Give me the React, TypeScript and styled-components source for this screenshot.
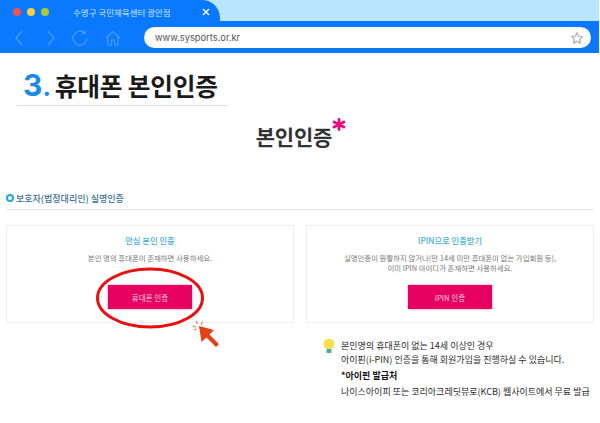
import styled, { createGlobalStyle } from 'styled-components';

const GlobalStyle = createGlobalStyle`
  html, body {
    margin: 0;
    padding: 0;
    background: #fff;
    font-family: 'Noto Sans CJK KR', 'Noto Sans', sans-serif;
  }
`;

const Page = styled.div`
  position: relative;
  width: 600px;
  height: 423px;
  overflow: hidden;
  background: #fff;
`;

// 브라우저 크롬
const TabBar = styled.div`
  height: 21px;
  margin-right: 1px;
  background: #b8e5ff;
  display: flex;
`;

const Tab = styled.div`
  width: 220px;
  height: 21px;
  background: #0a78ff;
  border-radius: 0 18px 0 0;
  display: flex;
  align-items: center;
  padding: 3px 0 0 13px;
  box-sizing: border-box;
`;

const Dots = styled.div`
  display: flex;
  gap: 6px;
`;

const Dot = styled.span<{ $color: string }>`
  width: 8px;
  height: 8px;
  border-radius: 50%;
  background: ${(p) => p.$color};
`;

const TabTitle = styled.span`
  margin-left: 24px;
  width: 100px;
  font-size: 8.5px;
  color: #cfe6ff;
  white-space: nowrap;
`;

const TabClose = styled.svg`
  margin-left: 28px;
  width: 10px;
  height: 10px;
`;

const Toolbar = styled.div`
  height: 32px;
  margin-right: 1px;
  background: #0a78ff;
  display: flex;
  align-items: center;
  padding: 1px 0 0 14px;
  box-sizing: border-box;
`;

const NavIcons = styled.div`
  display: grid;
  grid-template-columns: 32px 26px 33px 16px;
  align-items: center;
  width: 130px;
`;

const AddressBar = styled.div`
  width: 447px;
  height: 21px;
  background: #fff;
  border-radius: 11px;
  display: flex;
  align-items: center;
  justify-content: space-between;
  padding: 0 7px 0 11px;
  box-sizing: border-box;
  font-family: 'Inter', 'Noto Sans', sans-serif;
  font-size: 9.3px;
  color: #555;
`;

// 제목
const HeadingRow = styled.div`
  display: flex;
  align-items: baseline;
  width: 211px;
  margin: 14px 0 0 17px;
  padding-left: 6px;
  height: 39px;
  box-sizing: border-box;
  border-bottom: 1px solid #dedede;
  line-height: 36px;
`;

const StepNumber = styled.span`
  font-family: 'Inter', sans-serif;
  font-weight: 700;
  font-size: 30px;
  color: #1e88ee;
`;

const StepDot = styled.span`
  font-family: 'Inter', sans-serif;
  font-weight: 800;
  font-size: 24px;
  color: #1e88ee;
  margin-right: 4px;
`;

const HeadingText = styled.h1`
  margin: 0;
  font-size: 24.7px;
  font-weight: 700;
  color: #1a1a1a;
  letter-spacing: -0.2px;
`;

const Logo = styled.div`
  height: 42px;
  margin-top: 9px;
  padding-left: 2px;
  display: flex;
  justify-content: center;
  align-items: center;
  font-size: 21px;
  font-weight: 700;
  color: #333;
  letter-spacing: -0.2px;
`;

const LogoMark = styled.svg`
  align-self: flex-start;
  margin-top: 3px;
  width: 14px;
  height: 13px;
`;

const Section = styled.div`
  margin: 30px 6px 0 6px;
  height: 22px;
  border-bottom: 1px solid #e6e6e6;
  display: flex;
  align-items: center;
  gap: 2px;
  font-size: 9px;
  font-weight: 500;
  color: #3b6d94;
`;

const Ring = styled.span`
  width: 8px;
  height: 8px;
  box-sizing: border-box;
  border: 2px solid #1fa8d8;
  border-radius: 50%;
`;

const Cards = styled.div`
  display: grid;
  grid-template-columns: 288px 288px;
  gap: 12px;
  margin: 15px 0 0 6px;
`;

const Card = styled.div`
  position: relative;
  height: 98px;
  border: 1px solid #eee;
  box-sizing: border-box;
  display: flex;
  flex-direction: column;
  align-items: center;
  padding-top: 8px;
`;

const CardTitle = styled.div`
  font-size: 8.3px;
  line-height: 12px;
  font-weight: 500;
  color: #47aed6;
`;

const CardText = styled.div`
  margin-top: 7px;
  font-size: 7.4px;
  line-height: 10px;
  height: 20px;
  color: #777;
  text-align: center;
  white-space: nowrap;
`;

const AuthButton = styled.div`
  width: 84px;
  height: 24px;
  margin-top: 12px;
  background: #e6005f;
  color: #fbd0e2;
  box-shadow: 0 0 3px rgba(230, 0, 95, 0.4);
  font-size: 7.6px;
  display: flex;
  align-items: center;
  justify-content: center;
`;

const Ellipse = styled.svg`
  position: absolute;
  left: 88px;
  top: 40px;
`;

const Pointer = styled.svg`
  position: absolute;
  left: 190px;
  top: 320px;
`;

const Notes = styled.div`
  display: flex;
  gap: 5px;
  margin: 16px 0 0 322px;
`;

const Bulb = styled.svg`
  flex: none;
  margin-top: -1px;
`;

const NoteBody = styled.div`
  font-size: 9px;
  color: #2a2a2a;
  line-height: 14px;
  white-space: nowrap;
`;

const NoteStrong = styled.div`
  margin: 2px 0;
  font-weight: 700;
  color: #111;
`;

const NavIcon = ({ d, w = 10 }: { d: string; w?: number }) => (
  <svg width={w} height="16" viewBox={`0 0 ${w} 16`} fill="none" stroke="#4a9fff" strokeWidth="1.2">
    <path d={d} />
  </svg>
);

export default function App() {
  return (
    <>
      <GlobalStyle />
      <Page>
        <TabBar>
          <Tab>
            <Dots>
              <Dot $color="#f0524f" />
              <Dot $color="#f5d040" />
              <Dot $color="#a8cc30" />
            </Dots>
            <TabTitle>수영구 국민체육센터 광안점</TabTitle>
            <TabClose viewBox="0 0 10 10" fill="none" stroke="#fff" strokeWidth="1.4">
              <path d="M2 2 L8 8 M8 2 L2 8" />
            </TabClose>
          </Tab>
        </TabBar>
        <Toolbar>
          <NavIcons>
            <NavIcon d="M8 1 L2 8 L8 15" />
            <NavIcon d="M2 1 L8 8 L2 15" />
            <NavIcon w={16} d="M12.5 2.8 A7 7 0 1 0 15 8 M13 0.5 V3.5 H10" />
            <NavIcon w={16} d="M1 8 L8 1.5 L15 8 M3 7 V15 H6.5 V10 H9.5 V15 H13 V7" />
          </NavIcons>
          <AddressBar>
            www.sysports.or.kr
            <svg width="14" height="14" viewBox="0 0 24 24" fill="none" stroke="#bdbdbd" strokeWidth="2.6" strokeLinejoin="round">
              <path d="M12 3 L14.8 9 L21.5 9.8 L16.5 14.3 L17.9 21 L12 17.6 L6.1 21 L7.5 14.3 L2.5 9.8 L9.2 9 Z" />
            </svg>
          </AddressBar>
        </Toolbar>

        <HeadingRow>
          <StepNumber>3</StepNumber>
          <StepDot>.</StepDot>
          <HeadingText>휴대폰 본인인증</HeadingText>
        </HeadingRow>

        <Logo>
          본인인증
          <LogoMark viewBox="0 0 14 13" stroke="#ea0a78" strokeWidth="2.8" strokeLinecap="round">
            <path d="M7 1.5 V11.5 M2 4 L12 9 M12 4 L2 9" />
          </LogoMark>
        </Logo>

        <Section>
          <Ring />
          보호자(법정대리인) 실명인증
        </Section>

        <Cards>
          <Card>
            <CardTitle>안심 본인 인증</CardTitle>
            <CardText>본인 명의 휴대폰이 존재하면 사용하세요.</CardText>
            <AuthButton>휴대폰 인증</AuthButton>
            <Ellipse width="110" height="64" viewBox="0 0 110 64" fill="none">
              <ellipse cx="55" cy="32" rx="52.5" ry="29" stroke="#e8100f" strokeWidth="3" />
            </Ellipse>
          </Card>
          <Card>
            <CardTitle>IPIN으로 인증받기</CardTitle>
            <CardText>
              실명인증이 원활하지 않거나(만 14세 미만 휴대폰이 없는 가입회원 등),
              <br />
              이미 IPIN 아이디가 존재하면 사용하세요.
            </CardText>
            <AuthButton>IPIN 인증</AuthButton>
          </Card>
        </Cards>

        <Pointer width="34" height="30" viewBox="0 0 34 30" fill="none">
          <path d="M9 6 L24 10 L19.5 14.5 L29 24 L26 27 L16.5 17.5 L11.5 22 Z" fill="#e04314" />
          <path d="M12.7 1.7 L11 5 M6 1 L7.7 4.3 M2.7 6 L6 7 M4 10 L6.7 9" stroke="#e04314" strokeWidth="0.8" />
        </Pointer>

        <Notes>
          <Bulb width="14" height="16" viewBox="0 0 14 16">
            <circle cx="7" cy="6" r="5.5" fill="#f3e04f" />
            <rect x="4.5" y="11" width="5" height="4" rx="1" fill="#3fb0a0" />
          </Bulb>
          <NoteBody>
            본인명의 휴대폰이 없는 14세 이상인 경우
            <br />
            아이핀(i-PIN) 인증을 통해 회원가입을 진행하실 수 있습니다.
            <NoteStrong>*아이핀 발급처</NoteStrong>
            나이스아이피 또는 코리아크레딧뷰로(KCB) 웹사이트에서 무료 발급
          </NoteBody>
        </Notes>
      </Page>
    </>
  );
}
